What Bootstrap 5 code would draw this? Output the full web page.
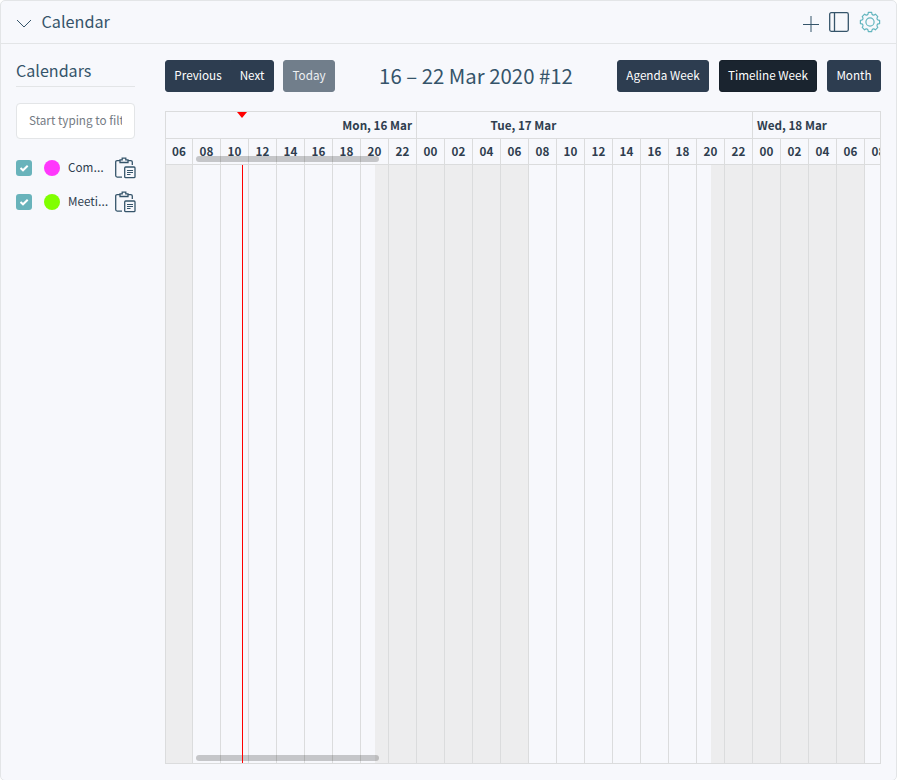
<!DOCTYPE html>
<html lang="en">
<head>
<meta charset="utf-8">
<meta name="viewport" content="width=device-width, initial-scale=1">
<title>Calendar</title>
<link href="https://cdn.jsdelivr.net/npm/bootstrap@5.3.0/dist/css/bootstrap.min.css" rel="stylesheet">
<style>
body{background:#fff;font-family:"Noto Sans CJK SC","Noto Sans",sans-serif;font-size:11.7px;line-height:18px;color:#2f3e4f}
.panel{height:781px;background:#f7f8fc;border:1px solid #e3e5e7;border-radius:5px}
.panel-top{height:43px;border-bottom:1px solid #e3e5e7;padding:0 15px;color:#35546a}
.panel-title{font-size:16.2px;line-height:24px;font-weight:400;color:#35546a;margin:0 0 2px 9.5px}
.side{width:119px;margin-left:15px}
.side h2{font-size:16.1px;line-height:24px;padding-bottom:4px;border-bottom:1px solid #e3e5e7;margin:14px 0 16px;color:#35546a;font-weight:400}
.side .form-control{height:36px;padding:0 12px 3px;font-size:11.7px;border-color:#e3e5e7;border-radius:4px;margin-bottom:12px}
.side .form-control::placeholder{color:#747b83}
.cal-row{height:34px;margin-right:-2px}
.tick{width:16px;height:16px;border-radius:3px;background:#69b3bb;color:#fff}
.dot{width:16px;height:16px;border-radius:50%;margin-left:12px}
.pink{background:#ff38fc}.lime{background:#80ff00}
.cal-label{margin-left:8px;width:44px;padding-bottom:3px;white-space:nowrap}
.cal-label i{font:13px/1 "Noto Sans",sans-serif}
.main{margin-left:30px;width:716px}
.btn-cal{--bs-btn-bg:#2d3d50;--bs-btn-color:#fff;--bs-btn-border-color:#2d3d50;--bs-btn-padding-x:0;--bs-btn-padding-y:0;--bs-btn-font-size:11.7px;--bs-btn-line-height:27px;--bs-btn-border-radius:3px;--bs-btn-active-bg:#1a242f;--bs-btn-active-border-color:#17202a;--bs-btn-active-color:#fff;--bs-btn-disabled-bg:#717e8b;--bs-btn-disabled-border-color:#717e8b;--bs-btn-disabled-color:#eef0f3;--bs-btn-disabled-opacity:1;height:32px;padding-bottom:3px;white-space:nowrap}
.w-prev{width:66px}.w-next{width:44px}.w-today{width:52px}.w-agenda{width:92px}.w-time{width:98px}.w-month{width:54px}
.gap-tool{gap:9px}.gap-view{gap:10px}
.range{font-size:20.35px;line-height:30px;height:32px;color:#35546a;font-weight:400;margin:0}
.timeline{height:653px;border:1px solid #dbdcdd;margin-top:19px}
.days{height:27px;border-bottom:1px solid #dbdcdd}
.days>div{border-right:1px solid #dbdcdd;padding:0 4px;line-height:26px;flex:none}
.d-mon{width:251px}.d-tue{width:336px}.d-wed{width:336px}
.d-tue span{margin-left:69.5px}
.hours,.slots{width:751px}
.hours{height:26px;border-bottom:1px solid #dbdcdd}
.hours>div,.slots>div{flex:none;width:28px;border-right:1px solid #dbdcdd;text-align:center;line-height:23px}
.hours>div:first-child,.slots>div:first-child{width:27px}
.slots{height:598px}
.slots .off{background:#ededee}
.slots .half{background:linear-gradient(90deg,transparent 14px,#ededee 14px)}
.now-line{left:76px;top:53px;width:1px;bottom:0;background:#f00}
.now-tip{left:71px;top:0;border:5px solid transparent;border-top:6px solid #f00;border-bottom:0}
.scroller{left:30px;width:183px;height:6px;border-radius:3px;background:rgba(0,0,0,.2)}
.s-top{top:44px}.s-bottom{bottom:2px}
svg{fill:none;stroke:currentColor;flex:none}
.icons{margin-bottom:1px}
.plus{margin-top:4px}
.clip{color:#35546a;margin-left:2.5px}
</style>
</head>
<body>
<section class="panel overflow-hidden">
<header class="panel-top d-flex align-items-center">
<svg class="mt-1" width="16" height="10" viewBox="0 0 16 10"><path d="M1 1 8 8 15 1"/></svg>
<h1 class="panel-title">Calendar</h1>
<div class="icons d-flex align-items-center ms-auto">
<svg class="plus" width="16" height="16" viewBox="0 0 16 16"><path d="M0 8.500H16M8 0V16"/></svg>
<svg class="mx-2" width="24" height="20" viewBox="0 0 24 20"><rect x="2.700" y=".7" width="18.600" height="18.600" rx="1.500" stroke-width="1.300"/><path d="M7.500 1V19" stroke-width="1.300"/></svg>
<svg width="22" height="22" viewBox="0 0 22 22" color="#62b5be" stroke-width="1.200" stroke-linejoin="round"><circle cx="11" cy="11" r="4.100"/><path d="M9.300 1.400h3.400c-.1 2.500 1.700 3.500 3.700 1.800l2.400 2.400c-1.700 2-.7 3.800 1.800 3.700v3.400c-2.500-.1-3.500 1.700-1.800 3.700l-2.400 2.400c-2-1.700-3.800-.7-3.700 1.800H9.300c.1-2.500-1.700-3.500-3.700-1.800l-2.400-2.400c1.700-2 .7-3.800-1.800-3.700V9.300c2.500.1 3.500-1.700 1.800-3.700l2.400-2.400c2 1.700 3.800.7 3.700-1.800z"/></svg>
</div>
</header>
<div class="d-flex">
<aside class="side flex-shrink-0">
<h2>Calendars</h2>
<input class="form-control" type="text" placeholder="Start typing to filter" aria-label="Filter calendars">
<div class="cal-row d-flex align-items-center">
<span class="tick d-flex"><svg width="16" height="16" viewBox="0 0 16 16" stroke-width="2"><path d="M4.500 8 7 10.300 11.700 5.700"/></svg></span>
<span class="dot pink"></span><span class="cal-label">Com<i>…</i></span>
<svg class="clip" width="21" height="22" viewBox="0 0 21 22" stroke-width="1.300"><path d="M5 3.600H2.200Q.7 3.600.7 5.100V18.600Q.7 20.100 2.200 20.100H7M13 3.600h2.800q1.500 0 1.500 1.500V8M5 5.500V2.900h2.200V1.200h3.600V2.900H13V5.500z"/><rect x="9.700" y="10" width="10.300" height="10.700" rx="1"/><path d="M12 13.500h6M12 15.500h6M12 17.500h3.500" stroke-width="1.100"/></svg>
</div>
<div class="cal-row d-flex align-items-center">
<span class="tick d-flex"><svg width="16" height="16" viewBox="0 0 16 16" stroke-width="2"><path d="M4.500 8 7 10.300 11.700 5.700"/></svg></span>
<span class="dot lime"></span><span class="cal-label">Meeti<i>…</i></span>
<svg class="clip" width="21" height="22" viewBox="0 0 21 22" stroke-width="1.300"><path d="M5 3.600H2.200Q.7 3.600.7 5.100V18.600Q.7 20.100 2.200 20.100H7M13 3.600h2.800q1.500 0 1.500 1.500V8M5 5.500V2.900h2.200V1.200h3.600V2.900H13V5.500z"/><rect x="9.700" y="10" width="10.300" height="10.700" rx="1"/><path d="M12 13.500h6M12 15.500h6M12 17.500h3.500" stroke-width="1.100"/></svg>
</div>
</aside>
<main class="main flex-shrink-0 pt-3">
<div class="d-flex justify-content-between">
<div class="d-flex gap-tool">
<div class="btn-group"><button class="btn btn-cal w-prev">Previous</button><button class="btn btn-cal w-next">Next</button></div>
<button class="btn btn-cal w-today" disabled>Today</button>
</div>
<h2 class="range">16 – 22 Mar 2020 #12</h2>
<div class="d-flex gap-view">
<button class="btn btn-cal w-agenda">Agenda Week</button><button class="btn btn-cal w-time active">Timeline Week</button><button class="btn btn-cal w-month">Month</button>
</div>
</div>
<div class="timeline position-relative overflow-hidden">
<div class="days d-flex fw-bold"><div class="d-mon text-end">Mon, 16 Mar</div><div class="d-tue"><span>Tue, 17 Mar</span></div><div class="d-wed">Wed, 18 Mar</div></div>
<div class="hours d-flex fw-bold">
<div>06</div><div>08</div><div>10</div><div>12</div><div>14</div><div>16</div><div>18</div><div>20</div><div>22</div>
<div>00</div><div>02</div><div>04</div><div>06</div><div>08</div><div>10</div><div>12</div><div>14</div><div>16</div><div>18</div><div>20</div><div>22</div>
<div>00</div><div>02</div><div>04</div><div>06</div><div>08</div>
</div>
<div class="slots d-flex">
<div class="off"></div><div></div><div></div><div></div><div></div><div></div><div></div><div class="half"></div><div class="off"></div>
<div class="off"></div><div class="off"></div><div class="off"></div><div class="off"></div><div></div><div></div><div></div><div></div><div></div><div></div><div class="half"></div><div class="off"></div>
<div class="off"></div><div class="off"></div><div class="off"></div><div class="off"></div><div></div>
</div>
<div class="scroller s-top position-absolute"></div>
<div class="scroller s-bottom position-absolute"></div>
<div class="now-tip position-absolute"></div>
<div class="now-line position-absolute"></div>
</div>
</main>
</div>
</section>
</body>
</html>
